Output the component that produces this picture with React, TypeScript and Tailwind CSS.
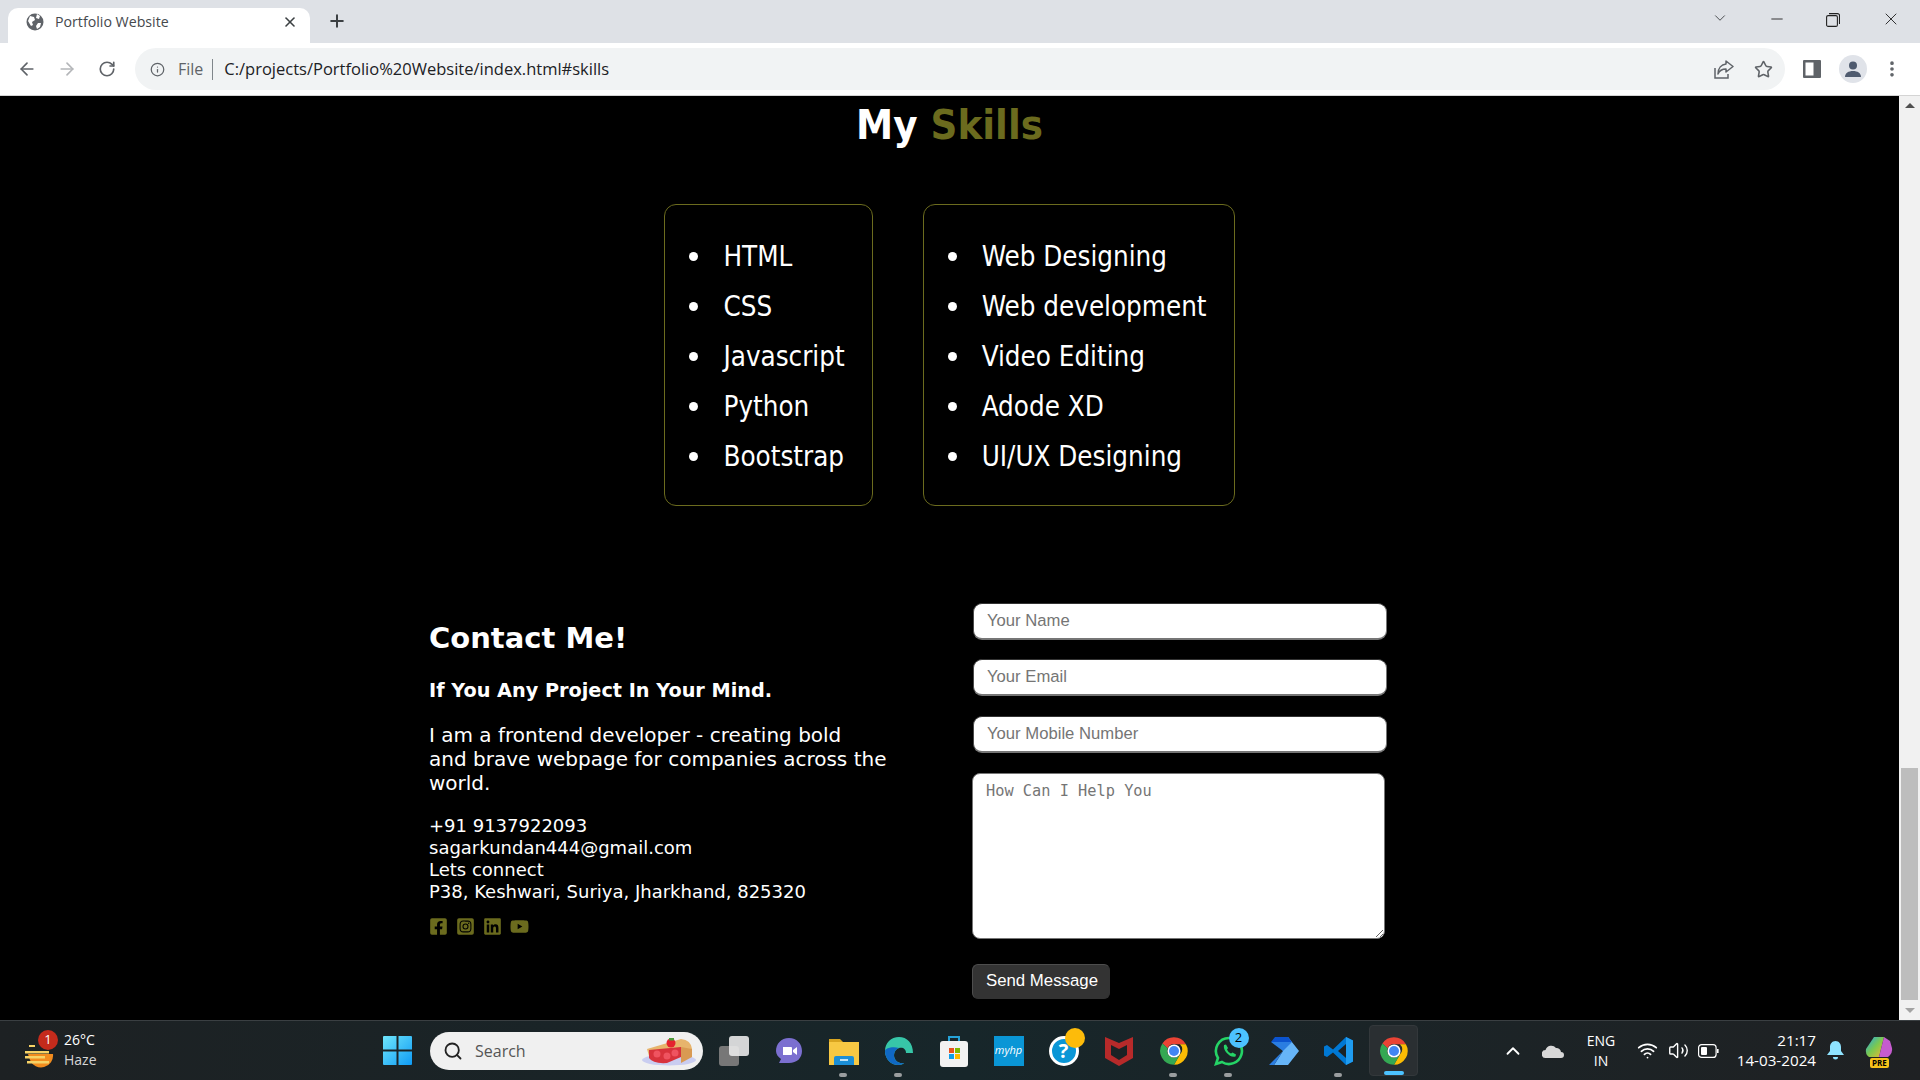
import React from 'react';
import { ArrowLeft, ArrowRight, RotateCw, Info, Star, X, Plus, ChevronDown, ChevronUp, Minus, Wifi, Volume2, Search, EllipsisVertical } from 'lucide-react';
import { FaFacebookSquare, FaInstagramSquare, FaLinkedin, FaYoutube } from 'react-icons/fa';

const ChromeIcon = () => (
  <svg width="30" height="30" viewBox="0 0 48 48">
    <path d="M24 2a22 22 0 0 1 19.05 11H24a11 11 0 0 0-10 6.4L5.4 12A22 22 0 0 1 24 2z" fill="#ea4335" />
    <path d="M43.05 13A22 22 0 0 1 24 46l9.5-16.5A11 11 0 0 0 33.5 13z" fill="#fbbc04" />
    <path d="M5.4 12A22 22 0 0 0 24 46l9.5-16.5A11 11 0 0 1 14 19.4z" fill="#34a853" />
    <circle cx="24" cy="24" r="10.5" fill="#fff" />
    <circle cx="24" cy="24" r="8" fill="#4285f4" />
  </svg>
);

const TaskIcon = ({ children, dot, active }: { children: React.ReactNode; dot?: boolean; active?: boolean }) => (
  <div className="relative flex h-[55px] w-[55px] items-center justify-center">
    {active && <span className="absolute inset-x-[3px] inset-y-[2px] rounded-[4px] border border-[#33383b] bg-[#2a2f32]" />}
    <div className="relative">{children}</div>
    {dot && <span className="absolute bottom-[1px] left-[23px] h-[4px] w-[8px] rounded-full bg-[#9a9d9f]" />}
    {active && <span className="absolute bottom-[3px] left-[18px] h-[4px] w-[20px] rounded-full bg-[#4cc2ff]" />}
  </div>
);

const skillsA = ['HTML', 'CSS', 'Javascript', 'Python', 'Bootstrap'];
const skillsB = ['Web Designing', 'Web development', 'Video Editing', 'Adode XD', 'UI/UX Designing'];

const SkillBox = ({ items }: { items: string[] }) => (
  <ul className="rounded-[12px] border border-[#6b6b1e] pt-[26px] pb-[24px] pl-[24px] pr-[27px] text-[27.5px] leading-[50px] text-white [font-family:'DejaVu_Sans_Condensed','DejaVu_Sans',sans-serif]">
    {items.map((s) => (
      <li key={s} className="flex items-center whitespace-nowrap">
        <span className="mr-[25px] h-[9px] w-[9px] rounded-full bg-white" />
        {s}
      </li>
    ))}
  </ul>
);

const inputClass =
  "h-[37px] w-[414px] rounded-[9px] border border-t-[#333] border-l-[#4a4a4a] border-r-[#767676] border-b-2 border-b-[#767676] bg-white px-[13px] pb-[1px] text-[16.67px] outline-none placeholder:text-[#757575] [font-family:'Liberation_Sans',sans-serif]";

export default function App() {
  return (
    <div className="flex h-[1080px] w-[1920px] flex-col overflow-hidden bg-black [font-family:'DejaVu_Sans',sans-serif]">
      {/* Tab strip */}
      <div className="flex h-[43px] items-end bg-[#dee1e6] pl-[8px] [font-family:'Open_Sans',sans-serif]">
        <div className="flex h-[35px] w-[302px] items-center rounded-t-[10px] bg-white pb-[8px] pl-[18px] pr-[12px]">
          <svg width="18" height="18" viewBox="0 0 18 18">
            <circle cx="9" cy="9" r="8.5" fill="#5f6368" />
            <path d="M4 3l4 1 1 3-3 2 1 3-2 1-3-5zM11 1l3 2-1 3-3-1zM12 10l3 0-1 4-3 2-1-3z" fill="#fff" />
          </svg>
          <span className="ml-[11px] text-[14.2px] text-[#45494d]">Portfolio Website</span>
          <X className="ml-auto h-[16px] w-[16px] text-[#3c4043]" strokeWidth={2.4} />
        </div>
        <Plus className="mb-[12px] ml-[17px] h-[20px] w-[20px] text-[#3c4043]" strokeWidth={2.4} />
        <ChevronDown className="mb-[16px] ml-auto h-[18px] w-[18px] text-[#3c4043]" strokeWidth={1.2} />
        <Minus className="mb-[15px] ml-[39px] h-[18px] w-[18px] text-[#222]" strokeWidth={1.2} />
        <svg className="mb-[16px] ml-[40px]" width="14" height="14" viewBox="0 0 14 14" fill="none" stroke="#222" strokeWidth="1.1">
          <rect x="0.6" y="2.6" width="10.8" height="10.8" rx="1.5" />
          <path d="M3 .6h8.5a2 2 0 0 1 2 2V11" />
        </svg>
        <X className="mb-[14px] ml-[41px] mr-[19px] h-[20px] w-[20px] text-[#222]" strokeWidth={1.1} />
      </div>

      {/* Toolbar */}
      <div className="flex h-[53px] items-center border-b border-[#d4d4d4] bg-white pl-[17px] [font-family:'Open_Sans',sans-serif]">
        <ArrowLeft className="h-[20px] w-[20px] text-[#5f6368]" strokeWidth={2} />
        <ArrowRight className="ml-[20px] h-[20px] w-[20px] text-[#b4b6b9]" strokeWidth={2} />
        <RotateCw className="ml-[21px] h-[18px] w-[18px] text-[#5f6368]" strokeWidth={2.2} />
        <div className="ml-[19px] flex h-[42px] w-[1650px] items-center rounded-full bg-[#f1f3f4] pl-[15px] pr-[9px]">
          <Info className="h-[15px] w-[15px] text-[#5f6368]" strokeWidth={2} />
          <span className="ml-[13px] text-[16px] text-[#5f6368]">File</span>
          <span className="ml-[9px] h-[21px] w-px bg-[#80868b]" />
          <span className="ml-[11px] text-[16.5px] text-[#202124]">C:/projects/Portfolio%20Website/index.html#skills</span>
          <svg className="ml-auto" width="20" height="19" viewBox="0 0 20 19" fill="none" stroke="#5f6368" strokeWidth="1.5">
            <path d="M1 8v10h13v-4" />
            <path d="M12 1l7 5.500-7 5.500V9C8 9 5.500 10.500 4 14c0-6 3.500-9.500 8-10z" strokeLinejoin="round" />
          </svg>
          <Star className="ml-[20px] mr-[3px] h-[19px] w-[19px] text-[#5f6368]" strokeWidth={2} />
        </div>
        <svg className="ml-[18px]" width="18" height="18" viewBox="0 0 18 18">
          <rect width="18" height="18" rx="1" fill="#5f6368" />
          <rect x="2.5" y="2.5" width="8" height="13" fill="#fff" />
        </svg>
        <div className="ml-[18px] flex h-[28px] w-[28px] items-center justify-center rounded-full bg-[#e0e3e9]">
          <svg width="18" height="18" viewBox="0 0 18 18" fill="#4f5b6f">
            <circle cx="9" cy="5.5" r="4" />
            <path d="M1 17c0-4 3.5-6 8-6s8 2 8 6z" />
          </svg>
        </div>
        <EllipsisVertical className="ml-[15px] h-[20px] w-[20px] text-[#5f6368]" strokeWidth={2.4} />
      </div>

      {/* Page + scrollbar */}
      <div className="flex h-[924px]">
        <main className="w-[1899px] bg-black">
          <h2 className="mt-[3px] text-center text-[41.5px] leading-[52px] font-bold text-white [font-family:'DejaVu_Sans_Condensed','DejaVu_Sans',sans-serif]">
            My <span className="text-[#6b6b1e]">Skills</span>
          </h2>
          <div className="mt-[53px] flex justify-center gap-[50px]">
            <SkillBox items={skillsA} />
            <SkillBox items={skillsB} />
          </div>

          <section className="mt-[97px] flex pl-[429px]">
            <div className="w-[544px] pt-[17px] text-white">
              <h3 className="text-[29px] leading-[36px] font-bold">Contact Me!</h3>
              <p className="mt-[23px] text-[19.25px] leading-[24px] font-bold">If You Any Project In Your Mind.</p>
              <p className="mt-[20px] w-[500px] text-[20px] leading-[24px]">
                I am a frontend developer - creating bold
                <br />
                and brave webpage for companies across the world.
              </p>
              <div className="mt-[20px] text-[18px] leading-[22px]">
                <div>+91 9137922093</div>
                <div>sagarkundan444@gmail.com</div>
                <div>Lets connect</div>
                <div>P38, Keshwari, Suriya, Jharkhand, 825320</div>
              </div>
              <div className="mt-[14px] flex items-center gap-[8px] text-[#6b6b1e]">
                <FaFacebookSquare className="h-[19px] w-[19px]" />
                <FaInstagramSquare className="h-[19px] w-[19px]" />
                <FaLinkedin className="h-[19px] w-[19px]" />
                <FaYoutube className="h-[19px] w-[19px]" />
              </div>
            </div>
            <form className="flex flex-col items-start">
              <input className={inputClass} placeholder="Your Name" />
              <input className={`${inputClass} mt-[19px]`} placeholder="Your Email" />
              <input className={`${inputClass} mt-[20px]`} placeholder="Your Mobile Number" />
              <textarea
                className="mt-[20px] -ml-px h-[166px] w-[413px] rounded-[8px] border border-[#767676] bg-white px-[13px] py-[6px] text-[15.3px] outline-none placeholder:text-[#757575] [font-family:'DejaVu_Sans_Mono',monospace]"
                placeholder="How Can I Help You"
              />
              <button type="button" className="mt-[25px] -ml-px h-[35px] w-[138px] rounded-[6px] border border-t-[#4d4d4d] border-l-[#4d4d4d] border-r-[#333] border-b-[#333] bg-[#333] pb-[1px] pl-[2px] text-[16.8px] text-white [font-family:'Liberation_Sans',sans-serif]">
                Send Message
              </button>
            </form>
          </section>
        </main>
        <div className="flex w-[21px] flex-col items-center justify-between bg-[#f1f1f1] py-[7px]">
          <span className="h-0 w-0 border-x-[5px] border-b-[5px] border-x-transparent border-b-[#505050]" />
          <div className="mt-auto mb-[8px] h-[232px] w-[17px] bg-[#bdbdbd]" />
          <span className="h-0 w-0 border-x-[5px] border-t-[5px] border-x-transparent border-t-[#a3a3a3]" />
        </div>
      </div>

      {/* Taskbar */}
      <footer className="flex h-[60px] items-center border-t border-[#3a3f42] bg-gradient-to-r from-[#1d2123] via-[#17262a] to-[#1f2123] text-white [font-family:'Open_Sans',sans-serif]">
        <div className="flex w-[383px] items-center pl-[24px]">
          <div className="relative h-[34px] w-[32px]">
            <svg width="30" height="32" viewBox="0 0 30 32" className="mt-[2px]">
              <path d="M4 18h25a12 12 0 0 1-23 6z" fill="#f28c1e" />
              <path d="M5 9h6v2H5zM1 15h24v2.500H1zM1 20h20v2.500H1zM3 25h22v2.500H3z" fill="#f6d266" />
            </svg>
            <span className="absolute top-[-4px] left-[14px] flex h-[20px] w-[20px] items-center justify-center rounded-full bg-[#c42b1c] text-[13px] leading-none">1</span>
          </div>
          <div className="ml-[8px] -mt-[2px] text-[14px] leading-[20px]">
            <div>26°C</div>
            <div className="text-[#d6d6d6]">Haze</div>
          </div>
        </div>
        <svg width="29" height="29" viewBox="0 0 29 29">
          <defs>
            <linearGradient id="win" x1="0" y1="0" x2="1" y2="1">
              <stop offset="0" stopColor="#6fe6fb" />
              <stop offset="1" stopColor="#0f9bf5" />
            </linearGradient>
          </defs>
          <path d="M0 1a1 1 0 0 1 1-1h12.500v13.500H0zM15.500 0H28a1 1 0 0 1 1 1v12.500H15.500zM0 15.500h13.500V29H1a1 1 0 0 1-1-1zM15.500 15.500H29V28a1 1 0 0 1-1 1H15.500z" fill="url(#win)" />
        </svg>
        <div className="ml-[18px] flex h-[38px] w-[273px] items-center rounded-full bg-[#f0f0f0] pl-[13px]">
          <Search className="h-[20px] w-[20px] text-[#222]" strokeWidth={2.2} />
          <span className="ml-[12px] text-[16px] text-[#555]">Search</span>
          <svg className="ml-[auto] mr-[6px]" width="56" height="30" viewBox="0 0 56 30">
            <ellipse cx="28" cy="24" rx="27" ry="5.500" fill="#c9cdf0" />
            <path d="M6 13L40 3q10 1 11 10v7L8 20z" fill="#e7b46c" />
            <path d="M8 14L40 11v10L26 27q-14 1-18-5z" fill="#d8323c" />
            <path d="M40 11l11 2v8l-11 6z" fill="#d99a52" />
            <circle cx="16" cy="18" r="3.500" fill="#ef5360" />
            <circle cx="26" cy="20" r="3.500" fill="#ef5360" />
            <circle cx="34" cy="17" r="3.500" fill="#ef5360" />
            <circle cx="30" cy="7" r="4.500" fill="#e5222e" />
            <path d="M28 2h5v2.500h-5z" fill="#4d9a3a" />
          </svg>
        </div>
        <div className="ml-[3px] flex items-center">
          <TaskIcon>
            <div className="relative h-[30px] w-[30px]">
              <div className="absolute bottom-0 left-0 h-[20px] w-[20px] rounded-[3px] bg-[#777]" />
              <div className="absolute top-0 right-0 h-[20px] w-[20px] rounded-[3px] bg-[#e9e9e9]/90" />
            </div>
          </TaskIcon>
          <TaskIcon>
            <svg width="30" height="30" viewBox="0 0 30 30">
              <path d="M15 2c8 0 13 6 13 13s-5 12-13 12H5l2-4c-3-2-5-5-5-8C2 8 7 2 15 2z" fill="#7b6fd0" />
              <path d="M9 11h8a1 1 0 0 1 1 1v6a1 1 0 0 1-1 1H9zM19 14l4-3v8l-4-3z" fill="#fff" />
            </svg>
          </TaskIcon>
          <TaskIcon dot>
            <svg width="30" height="30" viewBox="0 0 30 30">
              <path d="M0 3h11l3 3h-14z" fill="#d9a520" />
              <path d="M0 6h30v23H0z" fill="#f7c843" />
              <path d="M7 20h16a2 2 0 0 1 2 2v7H5v-7a2 2 0 0 1 2-2z" fill="#1b8ed6" />
              <path d="M11 23h8v2h-8z" fill="#bfe3f7" />
            </svg>
          </TaskIcon>
          <TaskIcon dot>
            <svg width="30" height="30" viewBox="0 0 30 30">
              <path d="M15 1C7 1 1 7 1 15c0 8 6 14 13 14 3 0 5-1 6-2-6 1-10-3-10-8 0-3 2-6 5-7 4-1 7 1 7 5h7C29 7 23 1 15 1z" fill="#37c6a8" />
              <path d="M1 15c0 8 6 14 13 14 3 0 5-1 6-2-6 1-10-3-10-8 0-3 2-6 5-7-6-2-14 0-14 3z" fill="#1068c4" />
            </svg>
          </TaskIcon>
          <TaskIcon>
            <svg width="30" height="34" viewBox="0 0 30 34">
              <path d="M10 8V3h10v5" fill="none" stroke="#25a3d8" strokeWidth="2" />
              <rect x="1" y="7" width="28" height="26" rx="3" fill="#f2f2f2" />
              <rect x="10" y="14" width="5" height="5" fill="#e8521e" />
              <rect x="16" y="14" width="5" height="5" fill="#7eb900" />
              <rect x="10" y="20" width="5" height="5" fill="#0f9ee8" />
              <rect x="16" y="20" width="5" height="5" fill="#fcb900" />
            </svg>
          </TaskIcon>
          <TaskIcon>
            <div className="flex h-[30px] w-[30px] items-center justify-center bg-[#0a96d6] text-[11px] italic text-white">myhp</div>
          </TaskIcon>
          <TaskIcon>
            <div className="relative flex h-[30px] w-[30px] items-center justify-center rounded-full border-[3px] border-white bg-[#0a96d6] text-[20px] font-bold text-white">
              ?
              <span className="absolute top-[-11px] right-[-9px] h-[20px] w-[20px] rounded-full bg-[#fdbb0a]" />
            </div>
          </TaskIcon>
          <TaskIcon>
            <svg width="28" height="30" viewBox="0 0 28 30">
              <path d="M0 1l14 6 14-6v21l-14 8-14-8z" fill="#b72a2a" />
              <path d="M6 9l8 4 8-4v10l-8 5-8-5z" fill="#1b2225" />
            </svg>
          </TaskIcon>
          <TaskIcon dot>
            <ChromeIcon />
          </TaskIcon>
          <TaskIcon dot>
            <div className="relative">
              <svg width="30" height="30" viewBox="0 0 30 30">
                <path d="M15 2a13 13 0 0 0-11 20l-2 6 6-2A13 13 0 1 0 15 2z" fill="none" stroke="#25d366" strokeWidth="2.600" />
                <path d="M10 9l2-.5 2 3.500-1 1.500c1 2 2 3 4 4l1.500-1 3.500 2-.5 2c-5 2-13-6-11.500-11.500z" fill="#25d366" />
              </svg>
              <span className="absolute top-[-8px] right-[-5px] flex h-[20px] w-[20px] items-center justify-center rounded-full bg-[#4cc2ff] text-[13px] leading-none text-black">2</span>
            </div>
          </TaskIcon>
          <TaskIcon>
            <svg width="30" height="28" viewBox="0 0 30 28">
              <path d="M6 0h13l11 14-11 14H5l9-14z" fill="#66b5f8" />
              <path d="M6 0h13l4 5H2z" fill="#0b53ce" />
              <path d="M2 5h21l-9 9z" fill="#2a7de1" />
              <path d="M14 14L5 28H0z" fill="#2a7de1" />
            </svg>
          </TaskIcon>
          <TaskIcon dot>
            <svg width="30" height="30" viewBox="0 0 30 30">
              <path d="M22 1l7 3.500v21L22 29 9 16.500 3 21l-3-1.500v-9L3 9l6 4.500z" fill="#0078d4" />
              <path d="M22 8l-8 7 8 7z" fill="#1b2225" />
              <path d="M22 1l7 3.500v21L22 29z" fill="#1f9cf0" />
            </svg>
          </TaskIcon>
          <TaskIcon active>
            <ChromeIcon />
          </TaskIcon>
        </div>

        {/* Tray */}
        <div className="ml-[81px] flex items-center">
          <ChevronUp className="h-[22px] w-[22px]" strokeWidth={2} />
          <svg className="ml-[18px]" width="22" height="14" viewBox="0 0 22 14" fill="#d8d8d8">
            <path d="M4 14a4 4 0 0 1-.5-8A6 6 0 0 1 14 4a4.500 4.500 0 0 1 5 4 3 3 0 0 1 0 6z" />
          </svg>
          <div className="ml-[19px] w-[36px] text-center text-[14px] leading-[20px]">
            <div>ENG</div>
            <div>IN</div>
          </div>
          <Wifi className="ml-[18px] h-[21px] w-[21px]" strokeWidth={2} />
          <Volume2 className="ml-[10px] h-[21px] w-[21px]" strokeWidth={1.6} />
          <svg className="ml-[9px]" width="21" height="14" viewBox="0 0 21 14" fill="none" stroke="#fff" strokeWidth="1.200">
            <rect x=".6" y=".6" width="17.500" height="12.800" rx="3" />
            <rect x="3" y="3" width="6" height="8" rx="1" fill="#fff" stroke="none" />
            <path d="M19.800 5v4" strokeWidth="1.600" />
          </svg>
          <div className="ml-[13px] -mt-[2px] w-[84px] text-right text-[15.2px] leading-[20px] whitespace-nowrap">
            <div>21:17</div>
            <div>14-03-2024</div>
          </div>
          <svg className="ml-[11px]" width="17" height="19" viewBox="0 0 17 19" fill="#8fe3ff">
            <path d="M8.500 0c3.500 0 5.500 3 5.500 6v4l3 4H0l3-4V6c0-3 2-6 5.500-6zM6 16h5a2.500 2.500 0 0 1-5 0z" />
          </svg>
          <div className="relative ml-[21px] h-[28px] w-[30px]">
            <svg width="28" height="24" viewBox="0 0 28 24">
              <defs>
                <linearGradient id="cop" x1="0" y1="0" x2="1" y2="1">
                  <stop offset="0" stopColor="#20a7e8" />
                  <stop offset="0.5" stopColor="#7bc94f" />
                  <stop offset="1" stopColor="#f2b632" />
                </linearGradient>
              </defs>
              <path d="M9 0h10l-5 20H4q-4-3-3-8z" fill="url(#cop)" />
              <path d="M19 0l-5 20h9q5-4 4-9l-2-7z" fill="#c65ccf" />
            </svg>
            <span className="absolute bottom-[-3px] left-[5px] rounded-[2px] bg-[#f7c21a] px-[2px] text-[8px] leading-[10px] font-bold text-black">PRE</span>
          </div>
        </div>
      </footer>
    </div>
  );
}
